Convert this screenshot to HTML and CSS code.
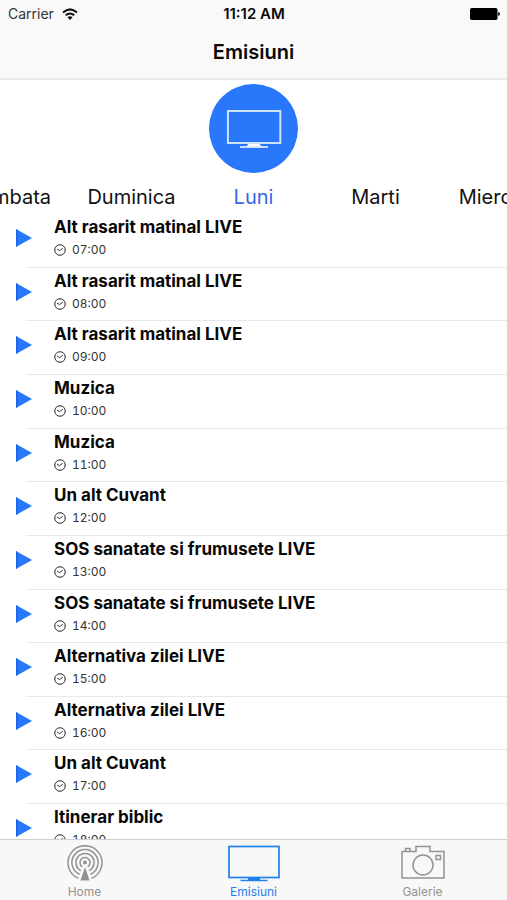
FILE: index.html
```html
<!DOCTYPE html>
<html lang="ro">
<head>
<meta charset="utf-8">
<meta name="viewport" content="width=device-width, initial-scale=1">
<title>Emisiuni</title>
<link rel="stylesheet" href="styles.css">
</head>
<body>
<svg class="defs" aria-hidden="true">
  <symbol id="play" viewBox="0 0 16 18"><path d="M0 0L16 9L0 18Z" fill="#2977fb"/><path d="M0 0L2 1.500V16.500L0 18Z" fill="#1f66e8"/></symbol>
  <symbol id="clock" viewBox="0 0 12 12"><circle cx="6" cy="6" r="5.3" fill="none" stroke="#333" stroke-width="1"/><path d="M3 5L5.6 6.6L8.8 4.2" fill="none" stroke="#333" stroke-width="1"/><path d="M6 1v1M6 10v1M1 6h1M10 6h1" stroke="#777" stroke-width=".8"/></symbol>
</svg>
<header class="top">
  <div class="status">
    <div class="carrier">Carrier
      <svg width="16" height="12" viewBox="0 0 16 12" fill="none" stroke="#111" stroke-width="2"><path d="M1 4.6Q8 -1.8 15 4.6"/><path d="M3.7 7.3Q8 3.6 12.3 7.3"/><path d="M8 12L5.4 9.2Q8 7.2 10.6 9.2Z" fill="#111" stroke="none"/></svg>
    </div>
    <time class="clock">11:12 AM</time>
    <svg class="battery" width="30" height="12" viewBox="0 0 30 12"><rect width="27.5" height="12" rx="1.8"/><path d="M28.2 4Q30 4.4 30 6T28.2 8Z"/></svg>
  </div>
  <h1 class="title">Emisiuni</h1>
</header>
<main class="main">
  <div class="badge">
    <svg width="56" height="40" viewBox="0 0 56 40"><rect x="1.9" y="2" width="52.4" height="32" fill="none" stroke="#d3e8ff" stroke-width="1.9"/><path d="M22.500 35h11l2 2.500h-15z" fill="#fff"/><path d="M14 38h28" stroke="#fff" stroke-width="1.500"/></svg>
  </div>
  <nav class="days" aria-label="Zile">
    <button class="day">Sambata</button>
    <button class="day">Duminica</button>
    <button class="day current" aria-current="date">Luni</button>
    <button class="day">Marti</button>
    <button class="day">Miercuri</button>
  </nav>
  <div class="schedule">
    <ul class="shows">
      <li class="show"><svg class="play"><use href="#play"/></svg><div class="info"><h2>Alt rasarit matinal LIVE</h2><p><svg class="dial"><use href="#clock"/></svg>07:00</p></div></li>
      <li class="show"><svg class="play"><use href="#play"/></svg><div class="info"><h2>Alt rasarit matinal LIVE</h2><p><svg class="dial"><use href="#clock"/></svg>08:00</p></div></li>
      <li class="show"><svg class="play"><use href="#play"/></svg><div class="info"><h2>Alt rasarit matinal LIVE</h2><p><svg class="dial"><use href="#clock"/></svg>09:00</p></div></li>
      <li class="show"><svg class="play"><use href="#play"/></svg><div class="info"><h2>Muzica</h2><p><svg class="dial"><use href="#clock"/></svg>10:00</p></div></li>
      <li class="show"><svg class="play"><use href="#play"/></svg><div class="info"><h2>Muzica</h2><p><svg class="dial"><use href="#clock"/></svg>11:00</p></div></li>
      <li class="show"><svg class="play"><use href="#play"/></svg><div class="info"><h2>Un alt Cuvant</h2><p><svg class="dial"><use href="#clock"/></svg>12:00</p></div></li>
      <li class="show"><svg class="play"><use href="#play"/></svg><div class="info"><h2>SOS sanatate si frumusete LIVE</h2><p><svg class="dial"><use href="#clock"/></svg>13:00</p></div></li>
      <li class="show"><svg class="play"><use href="#play"/></svg><div class="info"><h2>SOS sanatate si frumusete LIVE</h2><p><svg class="dial"><use href="#clock"/></svg>14:00</p></div></li>
      <li class="show"><svg class="play"><use href="#play"/></svg><div class="info"><h2>Alternativa zilei LIVE</h2><p><svg class="dial"><use href="#clock"/></svg>15:00</p></div></li>
      <li class="show"><svg class="play"><use href="#play"/></svg><div class="info"><h2>Alternativa zilei LIVE</h2><p><svg class="dial"><use href="#clock"/></svg>16:00</p></div></li>
      <li class="show"><svg class="play"><use href="#play"/></svg><div class="info"><h2>Un alt Cuvant</h2><p><svg class="dial"><use href="#clock"/></svg>17:00</p></div></li>
      <li class="show"><svg class="play"><use href="#play"/></svg><div class="info"><h2>Itinerar biblic</h2><p><svg class="dial"><use href="#clock"/></svg>18:00</p></div></li>
    </ul>
  </div>
</main>
<nav class="tabs" aria-label="Sectiuni">
  <a class="tab" href="#home">
    <svg width="36" height="38" viewBox="0 0 36 38" fill="none" stroke="currentColor" stroke-width="1.500"><circle cx="18" cy="17.500" r="2" fill="currentColor" stroke="none"/><path d="M15.300 21.800A5 5 0 1 1 20.700 21.800"/><path d="M13.800 25.600A9.100 9.100 0 1 1 22.200 25.600"/><path d="M12.600 29.500A13.100 13.100 0 1 1 23.400 29.500"/><path d="M11.500 33.400A17 17 0 1 1 24.500 33.400"/><path d="M18 22L22.500 35.500h-9z" fill="currentColor" stroke="none"/></svg>
    <span>Home</span>
  </a>
  <a class="tab active" href="#emisiuni" aria-current="page">
    <svg width="52" height="38" viewBox="0 0 52 38"><rect x="1" y="1.500" width="50" height="31" fill="none" stroke="currentColor" stroke-width="1.700"/><path d="M20 32h12v3H20z" fill="currentColor"/><path d="M12.500 35.500h27" stroke="currentColor" stroke-width="1.500"/></svg>
    <span>Emisiuni</span>
  </a>
  <a class="tab" href="#galerie">
    <svg width="44" height="38" viewBox="0 0 44 38" fill="none" stroke="currentColor" stroke-width="1.500"><path d="M1 6.500H15V1.500H29V6.500H43V33H1Z"/><path d="M4.500 6.500V3.500H9V6.500"/><circle cx="22" cy="20" r="10"/><path d="M35 10.500h4.500v4H35z"/></svg>
    <span>Galerie</span>
  </a>
</nav>
</body>
</html>
```
FILE: styles.css
```css
* { box-sizing: border-box; }

body {
  margin: 0;
  height: 100vh;
  display: flex;
  flex-direction: column;
  overflow: hidden;
  background: #fff;
  color: #080808;
  font-family: Inter, "Liberation Sans", sans-serif;
}

h1, h2, p, ul { margin: 0; padding: 0; }
svg { flex: none; }
.defs { position: absolute; width: 0; height: 0; }

.top {
  background: #f9f9f9;
  border-bottom: 2px solid #ebebeb;
}

.status {
  display: grid;
  grid-template-columns: 1fr auto 1fr;
  align-items: center;
  height: 27px;
  padding: 0 7px 0 8px;
  font-size: 14px;
}

.carrier {
  display: flex;
  align-items: center;
  gap: 8px;
  color: #333;
}

.clock {
  font-size: 15px;
  font-weight: 600;
}

.battery { justify-self: end; }

.title {
  height: 51px;
  line-height: 51px;
  text-align: center;
  font-size: 20px;
  font-weight: 600;
}

.main {
  flex: 1;
  min-height: 0;
  display: flex;
  flex-direction: column;
}

.badge {
  flex: none;
  display: grid;
  place-items: center;
  width: 89px;
  height: 89px;
  margin: 4px auto 10px;
  border-radius: 50%;
  background: #2977fb;
}

.days {
  flex: none;
  display: flex;
  justify-content: center;
  padding-bottom: 1px;
  overflow: hidden;
}

.day {
  flex: none;
  width: 122px;
  height: 30px;
  padding: 0 0 2px;
  border: 0;
  background: none;
  color: #111;
  font: 20px/28px Inter, "Liberation Sans", sans-serif;
}

.current { color: #3568e8; }

.schedule {
  flex: 1;
  min-height: 0;
  overflow: hidden;
}

/* The list runs slightly past the viewport so the last row hints at more. */
.shows {
  display: grid;
  grid-auto-rows: 1fr;
  height: 103%;
  list-style: none;
}

.show {
  display: flex;
  gap: 22px;
  padding-left: 16px;
  background: linear-gradient(#e8e8e8, #e8e8e8) 26px 100% / 100% 1px no-repeat;
}

.play {
  width: 16px;
  height: 18px;
  margin-top: 15px;
}

.info h2 {
  padding-top: 2px;
  font-size: 17px;
  line-height: 22px;
  font-weight: 700;
}

.info p {
  display: flex;
  align-items: center;
  gap: 6px;
  padding-top: 2px;
  font-size: 12px;
  line-height: 20px;
  color: #333;
  font-variant-numeric: tabular-nums;
}

.dial { width: 12px; height: 12px; }

.tabs {
  flex: none;
  display: grid;
  grid-template-columns: repeat(3, 1fr);
  height: 61px;
  padding-top: 5px;
  border-top: 1px solid #cfcfcf;
  background: #f8f8f8;
}

.tab {
  display: flex;
  flex-direction: column;
  align-items: center;
  color: #929292;
  font-size: 12px;
  line-height: 18px;
  text-decoration: none;
}

.active { color: #1f80ee; }
```
